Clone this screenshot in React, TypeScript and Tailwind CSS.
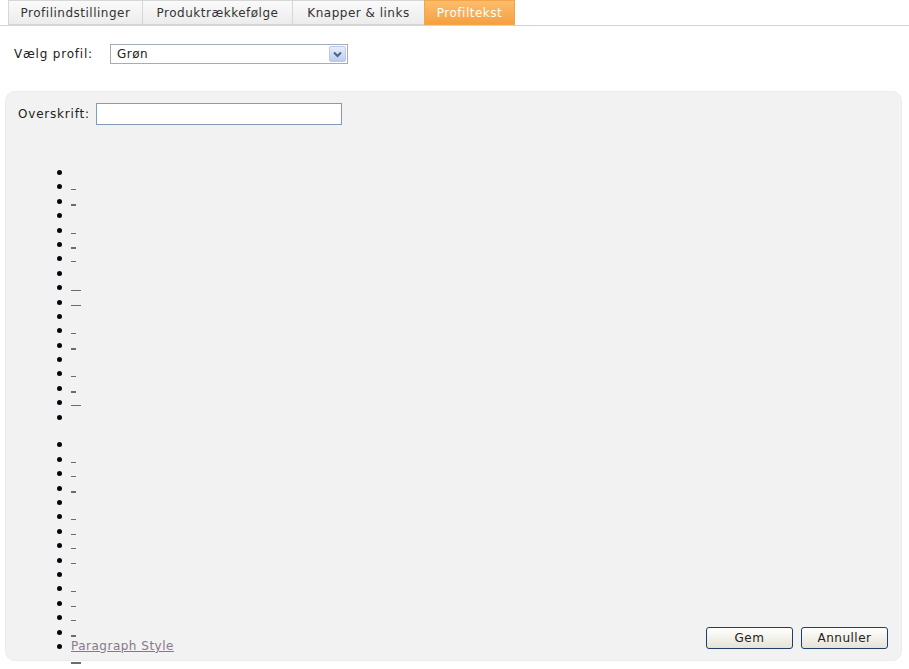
import React from "react";

type Mark = "none" | "thin" | "thick" | "wide";

const tabs = [
  { label: "Profilindstillinger", width: "w-[134px]", active: false },
  { label: "Produktrækkefølge", width: "w-[150px]", active: false },
  { label: "Knapper & links", width: "w-[132px]", active: false },
  { label: "Profiltekst", width: "w-[91px]", active: true },
];

// Tomme links fra editoren – kun understregningen ses
const items: Mark[] = [
  "none", "thin", "thick", "none", "thin", "thick", "thin", "none", "wide", "wide",
  "none", "thin", "thick", "none", "thin", "thick", "wide", "none",
];
const items2: Mark[] = [
  "none", "thin", "thin", "thick", "none", "thin", "thin", "thin", "thin", "none",
  "thin", "thin", "thin", "thick",
];

function Dash({ mark }: { mark: Mark }) {
  if (mark === "none") return null;
  const w = mark === "wide" ? "w-[10px] h-px" : mark === "thick" ? "w-[5px] h-[2px]" : "w-[5px] h-px";
  return <span className={`${w} bg-[#6b6b6b] mt-[9px]`} />;
}

function Item({ mark }: { mark: Mark }) {
  return (
    <li className="flex h-[14.4px] items-start">
      <span className="w-[5px] h-[5px] rounded-full bg-[#050510] mt-[4px] ml-[51px] mr-[9px]" />
      <Dash mark={mark} />
    </li>
  );
}

export default function App() {
  return (
    <div className="min-h-[669px] bg-white text-[#222] font-['DejaVu_Sans',Verdana,sans-serif] text-[12px] tracking-[0.5px]">
      {/* Faneblade */}
      <div className="flex h-[26px] pl-[8px] border-b border-[#d3d3d3]">
        {tabs.map((t) => (
          <div
            key={t.label}
            className={
              t.active
                ? `${t.width} flex items-center justify-center text-white bg-gradient-to-b from-[#fbbd6c] to-[#f6a03c] border border-[#f3a54c]`
                : `${t.width} flex items-center justify-center text-[#333] bg-gradient-to-b from-[#fafafa] to-[#ececec] border border-r-0 border-[#d6d6d6]`
            }
          >
            {t.label}
          </div>
        ))}
      </div>

      {/* Profilvalg */}
      <div className="flex items-center mt-[18px] pl-[14px] h-[20px]">
        <span className="w-[96px] tracking-[0.8px]">Vælg profil:</span>
        <div className="flex items-center w-[238px] h-[20px] border border-[#a5acb5] bg-white">
          <span className="flex-1 pl-[6px]">Grøn</span>
          <span className="flex items-center justify-center w-[17px] h-[16px] mr-px rounded-[2px] border border-[#b9c9ef] bg-gradient-to-b from-[#e6eefc] to-[#bcccf0]">
            <svg width="9" height="7" viewBox="0 0 9 7">
              <path d="M1 1.5 L4.5 5 L8 1.5" fill="none" stroke="#4d6185" strokeWidth="2" />
            </svg>
          </span>
        </div>
      </div>

      {/* Tekstpanel */}
      <div className="flex flex-col mx-[5px] mt-[27px] w-[897px] h-[570px] bg-[#f2f2f2] rounded-[10px] border border-[#ececec]">
        <div className="flex items-center pl-[12px] mt-[11px]">
          <span className="w-[78px] tracking-[0.8px]">Overskrift:</span>
          <div className="w-[246px] h-[22px] border border-[#7f9db9] bg-white" />
        </div>

        <div className="flex-1 min-h-0 mt-[41px]">
          <ul>
            {items.map((m, i) => (
              <Item key={"a" + i} mark={m} />
            ))}
          </ul>
          <ul className="mt-[13.4px]">
            {items2.map((m, i) => (
              <Item key={"b" + i} mark={m} />
            ))}
            <li className="flex h-[14.4px] items-start">
              <span className="w-[5px] h-[5px] rounded-full bg-[#050510] mt-[4px] ml-[51px] mr-[9px]" />
              <a className="text-[#8a7789] underline leading-[13px]">Paragraph Style</a>
            </li>
          </ul>
          <span className="block w-[10px] h-[2px] bg-[#6b6b6b] ml-[65px] mt-[8px]" />
        </div>

        <div className="flex justify-end gap-[8px] pr-[13px] pb-[11px]">
          <button className="w-[87px] h-[22px] rounded-[3px] border border-[#1f3f6a] bg-gradient-to-b from-white to-[#e6e3d6] tracking-[0.5px] text-[#222]">
            Gem
          </button>
          <button className="w-[87px] h-[22px] rounded-[3px] border border-[#1f3f6a] bg-gradient-to-b from-white to-[#e6e3d6] tracking-[0.5px] text-[#222]">
            Annuller
          </button>
        </div>
      </div>
    </div>
  );
}
